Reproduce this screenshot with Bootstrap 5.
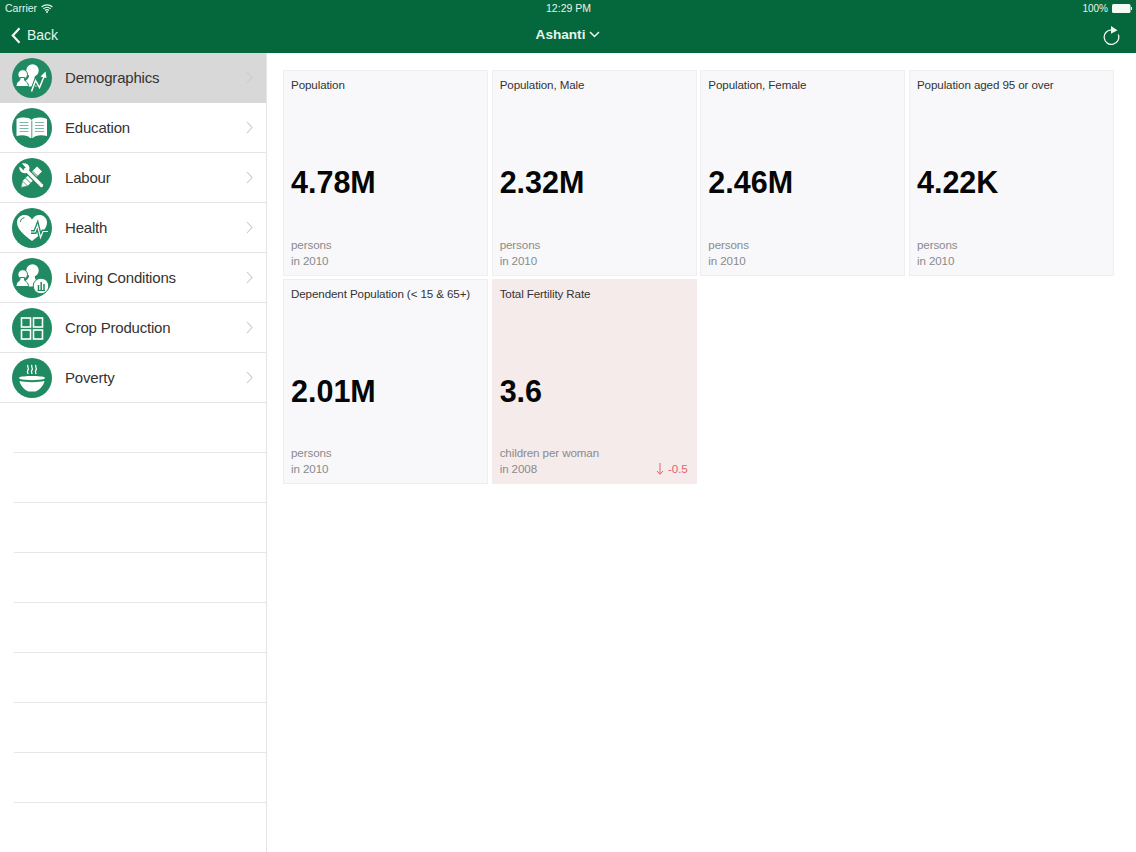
<!DOCTYPE html>
<html lang="en">
<head>
<meta charset="utf-8">
<title>Ashanti</title>
<link href="https://cdn.jsdelivr.net/npm/bootstrap@5.3.0/dist/css/bootstrap.min.css" rel="stylesheet">
<style>
html,body{height:100%;overflow:hidden}
body{font-family:"Liberation Sans",Arial,sans-serif;background:#fff;color:#222;width:1136px;height:852px}
.top-head{background:#05673c;color:#e6f5ec;height:53px}
.stat-bar{height:17px;font-size:10.5px;padding:0 4px 0 5px}
.stat-bar>div{flex:1 1 0}
.batt-txt{font-size:10px}
.nav-row{height:36px;padding:0 16px}
.nav-row>div{flex:1 1 0}
.back-chev{margin-left:-5px}
.back-txt{font-size:14px;margin-left:-2px;padding-top:1px}
.region{font-size:13.600px;font-weight:700}
.main-area{height:799px}
.side-col{width:267px;border-right:1px solid #e4e4e6;flex:none;height:799px;overflow:hidden}
.list-group-flush>.side-item,.list-group-flush>.side-item:last-child{height:50px;padding:0 13px 0 12px;border-width:0 0 1px;border-style:solid;border-color:#e4e4e6;border-radius:0;font-size:15px;letter-spacing:-.2px;color:#333;background:#fff;gap:13px}
.list-group-flush>.side-item.active-row{background:#d8d8d8;border-bottom-color:#d8d8d8;color:#333}
.side-label{padding-top:1px}
.side-blank{height:50px;margin-left:14px;border-bottom:1px solid #e6e6e8}
.ico{width:40px;height:40px;flex:none;display:block}
.chev{width:7px;height:13px;flex:none}
.active-row .chev{opacity:.8}
.tile-area{padding:17px 22px 0 16px;flex:1;display:grid;grid-template-columns:repeat(4,205px);grid-auto-rows:205.500px;gap:3px 3.67px;align-content:start}
.tile{background:#f8f8fa;border:1px solid #eeeef0;padding:7px 8px 6px 7px;display:flex;flex-direction:column}
.tile.bad{background:#f5ebeb;border-color:#f5ebeb}
.tile-name{font-size:11.600px;letter-spacing:-.1px;line-height:14px;color:#333;white-space:nowrap}
.tile-val{font-size:30.500px;font-weight:700;line-height:36px;color:#060606;margin-top:72px}
.tile-foot{margin-top:auto;font-size:11.600px;letter-spacing:-.1px;line-height:16px;color:#8a8a8c}
.tile-delta{color:#e4606f}
</style>
</head>
<body>
<svg width="0" height="0" class="position-absolute">
<defs>
<symbol id="people" viewBox="0 0 40 40">
<circle cx="20.500" cy="12.500" r="6.200" fill="#fff"/>
<path d="M17 16c1 3-2 6-4 7.500-2 1.500-2 3.500-2 5h17c0-2-.5-3.500-2-4.500-2-1.500-4-4-3-8z" fill="#fff"/>
<circle cx="10.700" cy="16.500" r="4.800" fill="#fff" stroke="#208a63" stroke-width="1"/>
<path d="M8 19.500c.6 2-1 3.500-2.500 4.500C4.300 25 4 27 4 28.500h12.500c0-1.500-.5-3.500-2-4.500-1.500-1-2.500-2.500-1.800-4.500z" fill="#fff" stroke="#208a63" stroke-width="1"/>
</symbol>
<symbol id="chevr" viewBox="0 0 7 13"><path d="M1 1l5 5.500-5 5.500" fill="none" stroke="#c9c9cc" stroke-width="1.100"/></symbol>
</defs>
</svg>

<header class="top-head d-flex flex-column">
  <div class="stat-bar d-flex align-items-center">
    <div class="d-flex align-items-center gap-1">
      <span>Carrier</span>
      <svg width="12" height="9" viewBox="0 0 12 9"><path d="M.6 3a8 8 0 0 1 10.800 0M2.300 4.800a5.500 5.500 0 0 1 7.400 0M4 6.500a3 3 0 0 1 4 0" fill="none" stroke="#e6f5ec" stroke-width="1.100"/><circle cx="6" cy="8" r="1" fill="#e6f5ec"/></svg>
    </div>
    <div class="text-center">12:29 PM</div>
    <div class="d-flex align-items-center justify-content-end gap-1">
      <span class="batt-txt">100%</span>
      <svg width="20" height="9" viewBox="0 0 20 9"><rect x="0" y="0" width="18.500" height="9" rx="1.500" fill="#f4fbf7"/><rect x="19" y="3" width="1" height="3" fill="#f4fbf7"/></svg>
    </div>
  </div>
  <div class="nav-row d-flex align-items-center">
    <div class="d-flex align-items-center gap-2">
      <svg class="back-chev" width="10" height="17" viewBox="0 0 10 17"><path d="M8.500 1.200L1.800 8.500l6.700 7.300" fill="none" stroke="#eef8f2" stroke-width="2.200"/></svg>
      <span class="back-txt">Back</span>
    </div>
    <div class="d-flex align-items-center justify-content-center gap-1 region">
      <span>Ashanti</span>
      <svg width="11" height="7" viewBox="0 0 11 7"><path d="M1 1l4.500 4.500L10 1" fill="none" stroke="#eef8f2" stroke-width="1.500"/></svg>
    </div>
    <div class="d-flex justify-content-end">
      <svg width="17" height="19" viewBox="0 0 17 19"><path d="M8.500 3.800A7.300 7.300 0 1 0 15.300 8.500" fill="none" stroke="#eef8f2" stroke-width="1.300"/><path d="M8 0l6.500 4.200L8 7.700z" fill="#eef8f2"/></svg>
    </div>
  </div>
</header>

<div class="main-area d-flex">
  <nav class="side-col">
    <div class="list-group list-group-flush">
      <a class="list-group-item side-item active-row d-flex align-items-center" href="#">
        <svg class="ico" viewBox="0 0 40 40"><circle cx="20" cy="20" r="20" fill="#208a63"/><use href="#people" width="40" height="40"/><path d="M19.500 33.500l4-11 4 7 5-12" fill="none" stroke="#208a63" stroke-width="3.600"/><path d="M19.500 33.500l4-11 4 7 5-12" fill="none" stroke="#fff" stroke-width="1.500"/><path d="M28.500 18.500l5-5 1 6.500z" fill="#fff"/></svg>
        <span class="side-label flex-grow-1">Demographics</span>
        <svg class="chev" viewBox="0 0 7 13"><use href="#chevr" width="7" height="13"/></svg>
      </a>
      <a class="list-group-item side-item d-flex align-items-center" href="#">
        <svg class="ico" viewBox="0 0 40 40"><circle cx="20" cy="20" r="20" fill="#208a63"/><path d="M4.500 11c5-2 12-2 15 1 3-3 10-3 15.500-1v17c-5.500-1.500-12-1-14 2h-3c-2-3-8.500-3.500-13.500-2z" fill="#fff"/><path d="M7.500 14.500h9M7.500 17.500h9M7.500 20.500h9M7.500 23.500h9M23 14.500h9M23 17.500h9M23 20.500h9M23 23.500h9" stroke="#7dbba3" stroke-width="1.100"/><path d="M19.800 12.500V30" stroke="#208a63" stroke-width=".8"/></svg>
        <span class="side-label flex-grow-1">Education</span>
        <svg class="chev" viewBox="0 0 7 13"><use href="#chevr" width="7" height="13"/></svg>
      </a>
      <a class="list-group-item side-item d-flex align-items-center" href="#">
        <svg class="ico" viewBox="0 0 40 40"><circle cx="20" cy="20" r="20" fill="#208a63"/><path d="M9 29.500l1.500-6.500 14.500-14.500 5 5-14.500 14.500z" fill="#fff"/><path d="M13.500 20l5 5M17 16.500l5 5M20.500 13l5 5" stroke="#208a63" stroke-width=".9"/><path d="M9 29.500l1.500-6.500 5 5z" fill="#fff" stroke="#208a63" stroke-width=".7"/><path d="M13.500 11.500L29 27" stroke="#208a63" stroke-width="5.800"/><path d="M13.500 11.500L29.500 27.500" stroke="#fff" stroke-width="3.200" stroke-linecap="round"/><path d="M7.500 8.500l4.500 4 1.500-.5.500-2-4-4.500c3-1 7 .5 7.500 4 .3 2.500-1 4.500-3.500 5.500-3.500 1-7.500-2-6.500-6.500z" fill="#fff"/></svg>
        <span class="side-label flex-grow-1">Labour</span>
        <svg class="chev" viewBox="0 0 7 13"><use href="#chevr" width="7" height="13"/></svg>
      </a>
      <a class="list-group-item side-item d-flex align-items-center" href="#">
        <svg class="ico" viewBox="0 0 40 40"><circle cx="20" cy="20" r="20" fill="#208a63"/><path d="M20 33C12 27 5 21 5 14.500 5 9.500 9 7 12.500 7c3.500 0 6 2 7.500 4.500C21.500 9 24 7 27.500 7 31 7 35 9.500 35 14.500 35 21 28 27 20 33z" fill="#fff"/><path d="M8.500 14c0-2.500 1.500-4 4-4.300" fill="none" stroke="#208a63" stroke-width="1"/><path d="M19 24h4l2.500-6.500 3 12 2.500-6h6" fill="none" stroke="#208a63" stroke-width="3.800"/><path d="M19 24h4l2.500-6.500 3 12 2.500-6h5" fill="none" stroke="#fff" stroke-width="1.200"/></svg>
        <span class="side-label flex-grow-1">Health</span>
        <svg class="chev" viewBox="0 0 7 13"><use href="#chevr" width="7" height="13"/></svg>
      </a>
      <a class="list-group-item side-item d-flex align-items-center" href="#">
        <svg class="ico" viewBox="0 0 40 40"><circle cx="20" cy="20" r="20" fill="#208a63"/><use href="#people" width="40" height="40"/><circle cx="29" cy="28" r="7.800" fill="#fff" stroke="#208a63" stroke-width="1"/><path d="M25.500 32.500h7.500" stroke="#208a63" stroke-width="1"/><path d="M26.500 27v5M29.200 24v8M32 26v6" stroke="#208a63" stroke-width="1.500"/></svg>
        <span class="side-label flex-grow-1">Living Conditions</span>
        <svg class="chev" viewBox="0 0 7 13"><use href="#chevr" width="7" height="13"/></svg>
      </a>
      <a class="list-group-item side-item d-flex align-items-center" href="#">
        <svg class="ico" viewBox="0 0 40 40"><circle cx="20" cy="20" r="20" fill="#208a63"/><g fill="none" stroke="#fff" stroke-width="1.600"><rect x="9.500" y="10" width="9" height="9"/><rect x="21.500" y="10" width="9" height="9"/><rect x="9.500" y="22" width="9" height="9"/><rect x="21.500" y="22" width="9" height="9"/></g></svg>
        <span class="side-label flex-grow-1">Crop Production</span>
        <svg class="chev" viewBox="0 0 7 13"><use href="#chevr" width="7" height="13"/></svg>
      </a>
      <a class="list-group-item side-item d-flex align-items-center" href="#">
        <svg class="ico" viewBox="0 0 40 40"><circle cx="20" cy="20" r="20" fill="#208a63"/><path d="M7 19.500c3-2 23-2 26 0-.2 1-.5 1.300-1 1.500-5 1.500-19 1.500-24 0-.5-.2-.8-.5-1-1.500zM7.500 23c6 1.500 19 1.500 25 0-1 5-5 9-9 10.500h-7c-4-1.500-8-5.500-9-10.500z" fill="#fff"/><path d="M16 7c-1.500 2 1.500 3 0 5s0 3 0 4M20 7c-1.500 2 1.500 3 0 5s0 3 0 4M24 7c-1.500 2 1.500 3 0 5s0 3 0 4" fill="none" stroke="#fff" stroke-width="1.300"/></svg>
        <span class="side-label flex-grow-1">Poverty</span>
        <svg class="chev" viewBox="0 0 7 13"><use href="#chevr" width="7" height="13"/></svg>
      </a>
    </div>
    <div class="side-blank"></div><div class="side-blank"></div><div class="side-blank"></div><div class="side-blank"></div><div class="side-blank"></div><div class="side-blank"></div><div class="side-blank"></div><div class="side-blank"></div><div class="side-blank"></div>
  </nav>

  <main class="tile-area">
    <section class="tile"><div class="tile-name">Population</div><div class="tile-val">4.78M</div><div class="tile-foot">persons<br>in 2010</div></section>
    <section class="tile"><div class="tile-name">Population, Male</div><div class="tile-val">2.32M</div><div class="tile-foot">persons<br>in 2010</div></section>
    <section class="tile"><div class="tile-name">Population, Female</div><div class="tile-val">2.46M</div><div class="tile-foot">persons<br>in 2010</div></section>
    <section class="tile"><div class="tile-name">Population aged 95 or over</div><div class="tile-val">4.22K</div><div class="tile-foot">persons<br>in 2010</div></section>
    <section class="tile"><div class="tile-name">Dependent Population (&lt; 15 &amp; 65+)</div><div class="tile-val">2.01M</div><div class="tile-foot">persons<br>in 2010</div></section>
    <section class="tile bad"><div class="tile-name">Total Fertility Rate</div><div class="tile-val">3.6</div><div class="tile-foot"><div>children per woman</div><div class="d-flex justify-content-between align-items-center"><span>in 2008</span><span class="tile-delta d-flex align-items-center gap-1"><svg width="8" height="12" viewBox="0 0 8 12"><path d="M4 0v11M1 8l3 3.300L7 8" fill="none" stroke="#e4606f" stroke-width="1"/></svg><span>-0.5</span></span></div></div></section>
  </main>
</div>
<script src="https://cdn.jsdelivr.net/npm/bootstrap@5.3.0/dist/js/bootstrap.bundle.min.js"></script>
</body>
</html>
